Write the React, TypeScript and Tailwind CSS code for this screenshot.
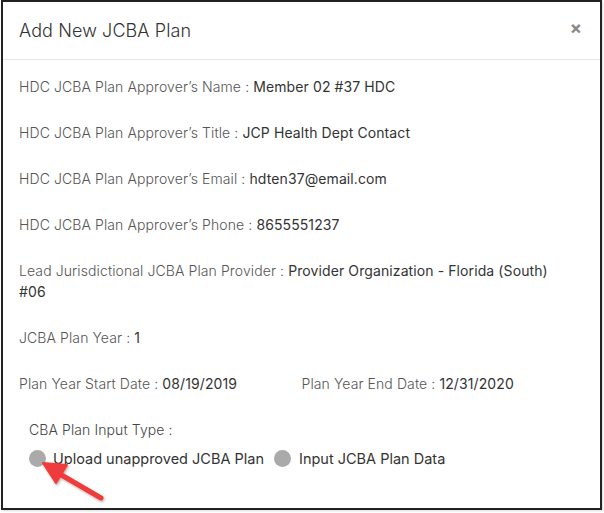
import React from "react";

const Row = ({ label, value }: { label: string; value: React.ReactNode }) => (
  <div className="leading-[21px]">
    <span className="font-light text-[#555]">{label} : </span>
    <span className="font-normal text-[#333]">{value}</span>
  </div>
);

export default function App() {
  return (
    <div className="relative w-[604px] h-[513px] bg-white" style={{ fontFamily: "Inter, 'Noto Sans', sans-serif" }}>
      <div className="ml-[1px] w-[601px] h-[510px] border-2 border-[#222] bg-white shadow-[1px_1px_2px_rgba(0,0,0,0.15)] flex flex-col">
        <div className="h-[58px] shrink-0 border-b border-[#e6e6e6] flex items-center justify-between pl-4 pr-[18px]">
          <div className="text-[18px] font-light text-[#333] tracking-[0.1px]">Add New JCBA Plan</div>
          <div className="text-[#888] text-[18px] font-bold leading-none -mt-[6px]">×</div>
        </div>
        <div className="pt-[16px] pl-4 pr-4 text-[14px] tracking-[0.1px] flex flex-col gap-[25px]">
          <Row label="HDC JCBA Plan Approver’s Name" value="Member 02 #37 HDC" />
          <Row label="HDC JCBA Plan Approver’s Title" value="JCP Health Dept Contact" />
          <Row label="HDC JCBA Plan Approver’s Email" value="hdten37@email.com" />
          <Row label="HDC JCBA Plan Approver’s Phone" value="8655551237" />
          <Row
            label="Lead Jurisdictional JCBA Plan Provider"
            value={
              <>
                Provider Organization - Florida (South)
                <br />
                #06
              </>
            }
          />
          <Row label="JCBA Plan Year" value="1" />
          <div className="grid grid-cols-2">
            <Row label="Plan Year Start Date" value="08/19/2019" />
            <Row label="Plan Year End Date" value="12/31/2020" />
          </div>
          <div className="pl-[10px] flex flex-col gap-[8px]">
            <div className="leading-[21px] font-light text-[#444]">CBA Plan Input Type :</div>
            <div className="flex items-center leading-[21px] text-[14.5px] tracking-normal text-[#333]">
              <span className="w-[17px] h-[17px] rounded-full bg-[#aaa] mr-[7px]" />
              <span>Upload unapproved JCBA Plan</span>
              <span className="w-[17px] h-[17px] rounded-full bg-[#aaa] ml-[10px] mr-[8px]" />
              <span>Input JCBA Plan Data</span>
            </div>
          </div>
        </div>
      </div>
      <svg className="absolute left-0 top-0 pointer-events-none" width="604" height="513">
        <defs>
          <filter id="sh" x="-20%" y="-20%" width="140%" height="140%">
            <feDropShadow dx="1" dy="1.5" stdDeviation="1" floodColor="#000" floodOpacity="0.3" />
          </filter>
        </defs>
        <g filter="url(#sh)">
          <line x1="101" y1="498" x2="58" y2="473" stroke="#ef3b3b" strokeWidth="5" strokeLinecap="round" />
          <polygon points="43,463 67,465 56,483" fill="#ef3b3b" stroke="#ef3b3b" strokeWidth="2" strokeLinejoin="round" />
        </g>
      </svg>
    </div>
  );
}
